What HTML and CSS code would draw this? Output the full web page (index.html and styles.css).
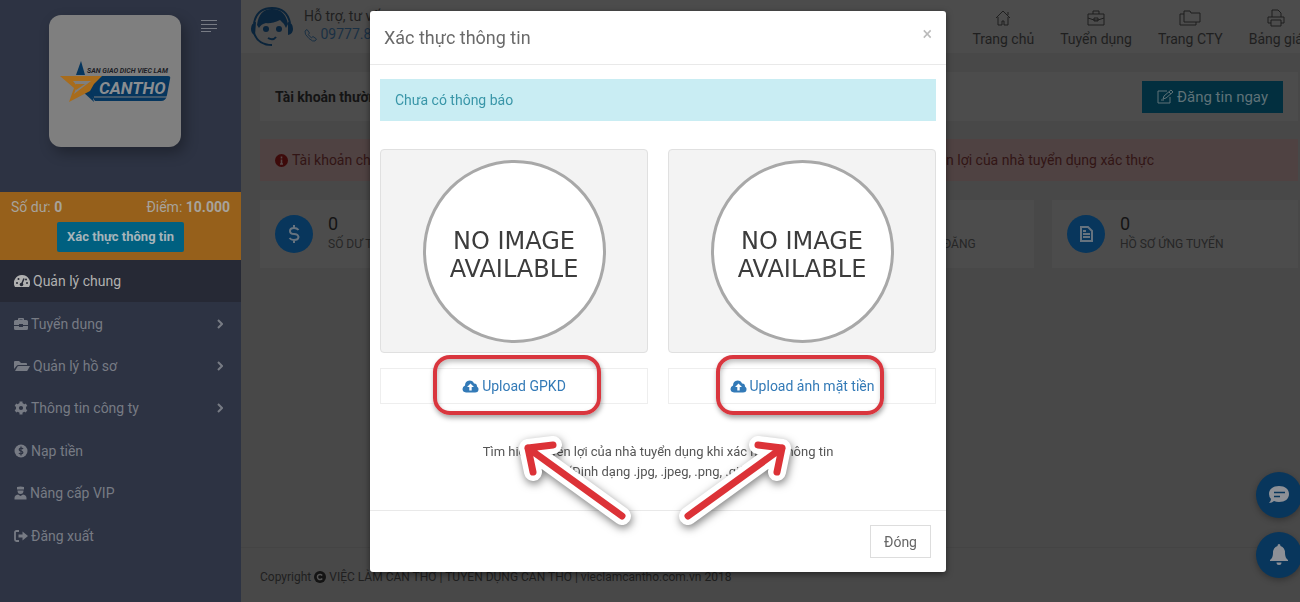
FILE: index.html
```
<!DOCTYPE html>
<html lang="vi">
<head>
    <meta charset="UTF-8">
    <meta name="viewport" content="width=device-width, initial-scale=1.0">
    <title>Xác thực thông tin</title>
    <link rel="stylesheet" href="styles.css">
</head>
<body>
    <div class="layout">
        <aside class="sidebar">
            <div class="brand">
                <a href="#" class="logo" aria-label="Sàn giao dịch việc làm Cần Thơ">
                    <svg viewBox="0 0 132 132" width="132" height="132">
                        <path d="M32 46l4 14h-9z" fill="#06365e"/>
                        <path d="M50 61h69q3 0 2 3l-3 16q-1 6-6 6H46l-7-10z" fill="#06365e"/>
                        <path d="M33 76l12 11-4-15z" fill="#06365e"/>
                        <path d="M45 82h73" stroke="#7f7f7f" stroke-width="1"/>
                        <path d="M11 61h42l-8 8-4 7-21 11 5-14z" fill="#a86c1c"/>
                        <path d="M24 66h18L25 79l3-8z" fill="#7f7f7f"/>
                        <path d="M27 69h9l-9 6z" fill="#a86c1c"/>
                        <text x="38" y="58" class="logo-small">SAN GIAO DICH VIEC LAM</text>
                        <text x="50" y="79" class="logo-big">CANTHO</text>
                    </svg>
                </a>
                <button class="toggle" aria-label="Menu">
                    <svg viewBox="0 0 16 14" width="16" height="14" stroke="currentColor"><path d="M0 1.500h16M0 5.500h16M0 9.500h16M0 12.500h10"/></svg>
                </button>
            </div>
            <div class="balance">
                <div class="balance-row">
                    <span>Số dư: <b>0</b></span>
                    <span>Điểm: <b>10.000</b></span>
                </div>
                <button class="verify">Xác thực thông tin</button>
            </div>
            <nav class="menu">
                <a href="#" class="active">
                    <svg viewBox="0 0 16 14" width="16" height="14"><path d="M8 1a8 8 0 0 0-7 12h14A8 8 0 0 0 8 1z" fill="currentColor"/><path d="M7.500 10.500l2.500-6" stroke="#262935" stroke-width="1.500"/><g fill="#262935"><circle cx="7.500" cy="10.500" r="1.800"/><circle cx="3" cy="9" r="1"/><circle cx="4.500" cy="5" r="1"/><circle cx="12" cy="5.500" r="1"/><circle cx="13" cy="9" r="1"/></g></svg>
                    Quản lý chung
                </a>
                <a href="#">
                    <svg viewBox="0 0 14 14" width="14" height="14" fill="currentColor"><path d="M4 3V2q0-1 1-1h4q1 0 1 1v1h2.500Q14 3 14 4.500V8H9V7H5v1H0V4.500Q0 3 1.500 3zm1.500 0h3v-.6h-3zM0 9h5v1h4V9h5v2.500q0 1.500-1.500 1.500h-11Q0 13 0 11.500z"/></svg>
                    Tuyển dụng
                    <svg class="arrow" viewBox="0 0 6 10" width="6" height="10"><path d="M1 1l4 4-4 4"/></svg>
                </a>
                <a href="#">
                    <svg viewBox="0 0 16 14" width="16" height="14" fill="currentColor"><path d="M0 10V3q0-1 1-1h4l2 2h5q1 0 1 1v1H4.500Q3 6 2.500 7zM1 12l2.500-4.500Q4 7 4.500 7H16l-2.500 4.500q-.5.500-1 .5z"/></svg>
                    Quản lý hồ sơ
                    <svg class="arrow" viewBox="0 0 6 10" width="6" height="10"><path d="M1 1l4 4-4 4"/></svg>
                </a>
                <a href="#">
                    <svg viewBox="0 0 14 14" width="14" height="14"><circle cx="7" cy="7" r="3.600" fill="none" stroke="currentColor" stroke-width="3"/><path d="M7 .5v2.500M7 11v2.500M1.400 3.700l2.200 1.300M10.400 9l2.200 1.300M1.400 10.300L3.600 9M10.400 5l2.200-1.300" stroke="currentColor" stroke-width="3"/></svg>
                    Thông tin công ty
                    <svg class="arrow" viewBox="0 0 6 10" width="6" height="10"><path d="M1 1l4 4-4 4"/></svg>
                </a>
                <a href="#">
                    <svg viewBox="0 0 14 14" width="14" height="14"><circle cx="7" cy="7" r="6.500" fill="currentColor"/><path d="M9.200 4.800Q7 3.600 5.500 4.700 4.600 6.300 7 7q2.600.8 1.500 2.300Q7 10.400 4.800 9.200M7 2.600v8.800" fill="none" stroke="#2d3343" stroke-width="1.200"/></svg>
                    Nạp tiền
                </a>
                <a href="#">
                    <svg viewBox="0 0 13 14" width="13" height="14" fill="currentColor"><path d="M3 1q3.500-1 7 0v2.500H3zM3.500 4.500h6q0 3.500-3 3.500t-3-3.500zM4 8.500l2.500 1.500L9 8.500q3.500.5 3.500 3.500v1.500H.5V12Q.5 9 4 8.500z"/></svg>
                    Nâng cấp VIP
                </a>
                <a href="#">
                    <svg viewBox="0 0 14 14" width="14" height="14"><path d="M5 2H2.500Q1 2 1 3.500v7Q1 12 2.500 12H5" fill="none" stroke="currentColor" stroke-width="1.800"/><path d="M4.500 5.500h4v-3L14 7l-5.500 4.500v-3h-4z" fill="currentColor"/></svg>
                    Đăng xuất
                </a>
            </nav>
        </aside>

        <main class="main">
            <header class="topbar">
                <div class="hotline">
                    <svg viewBox="0 0 44 40" width="44" height="40">
                        <path d="M7 18Q9 2 22 2q13 0 16 15l-2 4q-2-5-6-8-9 4-14 3-5 1-7 5z" fill="#0a243b"/>
                        <path d="M4 16Q7 1 22 1t18 15" fill="none" stroke="#0a243b" stroke-width="2"/>
                        <path d="M6 15q-5 1-5 7 0 5 4 6zM38 15q5 1 5 7 0 5-5 6z" fill="#0a243b"/>
                        <path d="M4 26q4 12 18 12" fill="none" stroke="#0a243b" stroke-width="2"/>
                        <circle cx="16" cy="22" r="3" fill="#0a243b"/><circle cx="29" cy="22" r="3" fill="#0a243b"/>
                        <path d="M18 31q5 3 8-1" fill="none" stroke="#0a243b" stroke-width="2"/>
                    </svg>
                    <div>
                        <p>Hỗ trợ, tư vấn</p>
                        <a href="#">
                            <svg class="line-icon" viewBox="0 0 13 13" width="13" height="13"><path d="M1 2l2-1.500L5.500 4 4.300 5.500q1 2 3.200 3.200L9 7.500l3.500 2.500-1.500 2Q9 13 5 9.500 0 5 1 2z"/></svg>
                            09777.85.179
                        </a>
                    </div>
                </div>
                <nav class="topnav">
                    <a href="#">
                        <svg class="line-icon" viewBox="0 0 20 18" width="20" height="18"><path d="M3 9l7-7 7 7M5 8v8h4v-4h2v4h4V8M15 6V3"/></svg>
                        Trang chủ
                    </a>
                    <a href="#">
                        <svg class="line-icon" viewBox="0 0 20 18" width="20" height="18"><path d="M2 5h16v11H2zM7 5V2h6v3M2 9l6 2h4l6-2M8 9h4v3H8z"/></svg>
                        Tuyển dụng
                    </a>
                    <a href="#">
                        <svg class="line-icon" viewBox="0 0 22 18" width="22" height="18"><path d="M5 2h6l1 2h9v9H5zM5 5H1v11h16v-3"/></svg>
                        Trang CTY
                    </a>
                    <a href="#">
                        <svg class="line-icon" viewBox="0 0 20 18" width="20" height="18"><path d="M6 8V1h6l3 3v4M5 14H2V8h16v6h-3M5 11h10v6H5z"/></svg>
                        Bảng giá
                    </a>
                </nav>
            </header>

            <div class="content">
                <section class="account">
                    <h1>Tài khoản thường</h1>
                    <button class="post">
                        <svg viewBox="0 0 17 15" width="17" height="15" fill="none" stroke="currentColor"><path d="M10 2H1v12h12V8M6 10l1-3 7-6 2 2-7 6zM12 3l2 2M4 11h3"/></svg>
                        Đăng tin ngay
                    </button>
                </section>

                <div class="warning">
                    <svg viewBox="0 0 13 13" width="13" height="13"><circle cx="6.500" cy="6.500" r="6.500" fill="#3d0a0a"/><path d="M6.500 2.500v2M6.500 5.500v5M5 10h3" stroke="#574747" stroke-width="1.600"/></svg>
                    Tài khoản chưa được xác thực, vui lòng xác thực thông tin để sử dụng đầy đủ dịch vụ. Tìm hiểu thêm quyền lợi của nhà tuyển dụng xác thực
                </div>

                <section class="stats">
                    <div class="stat">
                        <span class="stat-icon"><svg viewBox="0 0 12 20" width="12" height="20" fill="none" stroke="currentColor" stroke-width="2"><path d="M10.500 6Q9 4 6 4 2 4 2 7t4 3 4.500 3Q10 16 6 16 3 16 1.500 14M6 1v3M6 16v3"/></svg></span>
                        <div><strong>0</strong><span>SỐ DƯ TÀI KHOẢN</span></div>
                    </div>
                    <div class="stat">
                        <span class="stat-icon"></span>
                        <div><strong>0</strong><span>ĐIỂM</span></div>
                    </div>
                    <div class="stat">
                        <span class="stat-icon"></span>
                        <div><strong>0</strong><span>TIN TUYỂN MỚI ĐĂNG</span></div>
                    </div>
                    <div class="stat">
                        <span class="stat-icon"><svg viewBox="0 0 14 16" width="14" height="16" fill="none" stroke="currentColor" stroke-width="2"><path d="M2 1h7l4 4v10H2zM4 8h7M4 11h7M4 5h3"/></svg></span>
                        <div><strong>0</strong><span>HỒ SƠ ỨNG TUYỂN</span></div>
                    </div>
                </section>
            </div>

            <footer class="footer">
                Copyright
                <svg viewBox="0 0 12 12" width="12" height="12"><circle cx="6" cy="6" r="6" fill="#141414"/><path d="M8.200 4.500a2.600 2.600 0 1 0 0 3" fill="none" stroke="#555" stroke-width="1.500"/></svg>
                VIỆC LÀM CẦN THƠ | TUYỂN DỤNG CẦN THƠ | vieclamcantho.com.vn 2018
            </footer>
        </main>
    </div>

    <div class="floating">
        <button aria-label="Tin nhắn">
            <svg viewBox="0 0 22 20" width="22" height="20"><path d="M11 1c6 0 10 3 10 8s-4 8-10 8q-3 0-5-1-2 2-5 2 2-2 2-4-2-2-2-5c0-5 4-8 10-8z" fill="currentColor"/><path d="M6 7.500h11M6 11.500h6" stroke="#08365c" stroke-width="1.500"/></svg>
        </button>
        <button aria-label="Thông báo">
            <svg viewBox="0 0 20 22" width="20" height="22" fill="currentColor"><path d="M10 0q1.500 0 1.500 2Q16 3.500 16 9q0 5 3 7v1H1v-1q3-2 3-7 0-5.500 4.500-7Q8.500 0 10 0zM7.500 18.500h5Q12.500 21 10 21t-2.500-2.500z"/></svg>
        </button>
    </div>

    <div class="overlay">
        <div class="modal" role="dialog" aria-labelledby="modal-title">
            <div class="modal-header">
                <h2 id="modal-title">Xác thực thông tin</h2>
                <button class="close" aria-label="Close">×</button>
            </div>
            <div class="modal-body">
                <div class="notice">Chưa có thông báo</div>
                <div class="uploads">
                    <div class="upload">
                        <div class="preview"><div class="no-image">NO IMAGE<br>AVAILABLE</div></div>
                        <div class="upload-box">
                            <a href="#">
                                <svg viewBox="0 0 17 13" width="17" height="13"><path d="M4 12.500Q.5 12 .5 9 .5 6.500 3 5.500 3 1 7.500.5q3.500 0 4.500 3 3-.2 3 3 2 1 1.500 3.500-.5 2.500-3.500 2.500z" fill="currentColor"/><path d="M8.500 3.500L5 7h2.300v3.500h2.400V7H12z" fill="#fff"/></svg>
                                Upload GPKD
                            </a>
                            <span class="mark mark-left"></span>
                        </div>
                    </div>
                    <div class="upload">
                        <div class="preview"><div class="no-image">NO IMAGE<br>AVAILABLE</div></div>
                        <div class="upload-box">
                            <a href="#">
                                <svg viewBox="0 0 17 13" width="17" height="13"><path d="M4 12.500Q.5 12 .5 9 .5 6.500 3 5.500 3 1 7.500.5q3.500 0 4.500 3 3-.2 3 3 2 1 1.500 3.500-.5 2.500-3.500 2.500z" fill="currentColor"/><path d="M8.500 3.500L5 7h2.300v3.500h2.400V7H12z" fill="#fff"/></svg>
                                Upload ảnh mặt tiền
                            </a>
                            <span class="mark mark-right"></span>
                        </div>
                    </div>
                </div>
                <p class="hint">Tìm hiểu quyền lợi của nhà tuyển dụng khi xác nhận thông tin<br>(Định dạng .jpg, .jpeg, .png, .gif)</p>
            </div>
            <div class="modal-footer">
                <button class="dismiss">Đóng</button>
            </div>
            <svg class="pointers" viewBox="0 0 290 110" width="290" height="110">
                <g class="pointer-edge"><path d="M112 86L18 18M43 15L18 18l5 24"/><path d="M178 86l94-68M248 15l24 3-5 24"/></g>
                <g class="pointer-line"><path d="M112 86L18 18M43 15L18 18l5 24"/><path d="M178 86l94-68M248 15l24 3-5 24"/></g>
            </svg>
        </div>
    </div>
</body>
</html>
```
FILE: styles.css
```
* {
    box-sizing: border-box;
}
body {
    margin: 0;
    font-family: Roboto, "Liberation Sans", sans-serif;
    font-size: 14px;
    line-height: 20px;
    color: #1f1f1f;
    background: #484848;
    overflow: hidden;
}
h1, h2, p {
    margin: 0;
}
a {
    color: inherit;
    text-decoration: none;
}
button {
    font: inherit;
    color: inherit;
    border: none;
    background: none;
    padding: 0;
    cursor: pointer;
}
svg {
    flex: none;
}
.layout {
    display: flex;
    min-height: 100vh;
}

/* sidebar */
.sidebar {
    width: 241px;
    flex: none;
    background: #2d3343;
    color: #777b84;
}
.brand {
    display: flex;
    align-items: flex-start;
    justify-content: space-between;
    height: 192px;
    padding: 15px 24px 0 49px;
}
.logo {
    height: 132px;
    border-radius: 12px;
    background: #7f7f7f;
    box-shadow: 4px 6px 14px rgba(0, 0, 0, 0.3);
}
.logo-small {
    font: italic bold 7px Roboto, sans-serif;
    fill: #1c2026;
}
.logo-big {
    font: italic bold 17px Roboto, sans-serif;
    fill: #8a8d90;
}
.toggle {
    height: 14px;
    margin-top: 4px;
    line-height: 0;
}
.balance {
    height: 68px;
    padding: 5px 11px;
    text-align: center;
    background: #96601b;
    color: #a7a39c;
}
.balance-row {
    display: flex;
    justify-content: space-between;
    margin-bottom: 5px;
}
.verify {
    height: 30px;
    padding: 0 10px;
    border-radius: 2px;
    font-size: 13px;
    font-weight: bold;
    background: #006080;
    color: #a6b4ba;
}
.menu {
    display: grid;
    grid-template-rows: repeat(7, 1fr);
    height: 297px;
}
.menu a {
    display: flex;
    align-items: center;
    gap: 3px;
    padding: 0 18px 0 14px;
}
.menu .active {
    background: #262935;
    color: #b0b0b0;
}
.arrow {
    margin-left: auto;
    fill: none;
    stroke: currentColor;
    stroke-width: 2;
}

/* page */
.main {
    flex: 1;
    min-width: 0;
    display: flex;
    flex-direction: column;
}
.topbar {
    display: flex;
    justify-content: space-between;
    height: 53px;
    padding: 7px 0 0 9px;
    margin-right: -3px;
    background: #4c4c4c;
}
.hotline {
    display: flex;
    gap: 10px;
    line-height: 18px;
}
.hotline a {
    color: #1a3044;
}
.line-icon {
    fill: none;
    stroke: currentColor;
}
.hotline .line-icon {
    vertical-align: middle;
}
.topnav {
    display: flex;
    gap: 26px;
}
.topnav a {
    display: flex;
    flex-direction: column;
    align-items: center;
    gap: 2px;
    padding-top: 2px;
}
.content {
    flex: 1;
    padding: 19px 2px 0 19px;
}
.account {
    display: flex;
    align-items: center;
    justify-content: space-between;
    height: 49px;
    padding: 0 15px;
    margin-bottom: 18px;
    background: #4c4c4c;
}
.account h1 {
    font-size: 14px;
    color: #141414;
}
.post {
    display: flex;
    align-items: center;
    gap: 3px;
    height: 32px;
    padding: 0 15px;
    font-size: 15px;
    background: #022f3f;
    color: #5f7278;
}
.warning {
    display: flex;
    align-items: center;
    gap: 4px;
    height: 42px;
    padding: 0 15px;
    margin-bottom: 19px;
    white-space: nowrap;
    background: #4f4242;
    color: #321515;
}
.stats {
    display: grid;
    grid-template-columns: repeat(4, 1fr);
    gap: 18px;
}
.stat {
    display: flex;
    align-items: center;
    gap: 15px;
    height: 68px;
    padding: 0 15px;
    background: #4c4c4c;
}
.stat strong, .stat div span {
    display: block;
    white-space: nowrap;
}
.stat strong {
    font-size: 18px;
    font-weight: normal;
    color: #141414;
}
.stat div span {
    font-size: 12px;
    color: #262626;
}
.stat-icon {
    display: flex;
    align-items: center;
    justify-content: center;
    flex: none;
    width: 38px;
    height: 38px;
    border-radius: 50%;
    background: #08365c;
    color: #66737f;
}
.footer {
    display: flex;
    align-items: center;
    gap: 3px;
    height: 55px;
    padding: 4px 19px 0;
    border-top: 1px solid #444;
    font-size: 12px;
}
.floating {
    position: fixed;
    right: -2px;
    bottom: 24px;
    display: flex;
    flex-direction: column;
    gap: 14px;
}
.floating button {
    display: flex;
    align-items: center;
    justify-content: center;
    width: 46px;
    height: 46px;
    border-radius: 50%;
    background: #08365c;
    color: #8d9096;
    box-shadow: 0 2px 6px rgba(0, 0, 0, 0.3);
}

/* modal */
.overlay {
    position: fixed;
    inset: 0;
    display: flex;
    justify-content: center;
    align-items: flex-start;
    padding: 11px 0 0 16px;
}
.modal {
    position: relative;
    width: 576px;
    border-radius: 3px;
    background: #fff;
    color: #555;
    box-shadow: 0 2px 6px rgba(0, 0, 0, 0.5);
}
.modal-header {
    display: flex;
    align-items: center;
    justify-content: space-between;
    height: 54px;
    padding: 0 14px;
    border-bottom: 1px solid #e9e9e9;
}
.modal-header h2 {
    font-size: 18px;
    font-weight: normal;
    color: #6a6a6a;
}
.close {
    padding-bottom: 8px;
    font-size: 18px;
    color: #bbb;
}
.modal-body {
    padding: 14px 10px 28px;
}
.notice {
    padding: 11px 15px;
    margin-bottom: 28px;
    background: #c9edf3;
    color: #3996a8;
}
.uploads {
    display: grid;
    grid-template-columns: 1fr 1fr;
    gap: 20px;
    margin-bottom: 38px;
}
.preview {
    display: flex;
    align-items: center;
    justify-content: center;
    height: 204px;
    margin-bottom: 15px;
    border: 1px solid #e0e0e0;
    border-radius: 4px;
    background: #f3f3f3;
}
.no-image {
    display: flex;
    align-items: center;
    justify-content: center;
    width: 183px;
    height: 183px;
    padding-top: 8px;
    border: 3px solid #a8a8a8;
    border-radius: 50%;
    background: #fff;
    color: #3c3c3c;
    font: 24px/28px "DejaVu Sans", sans-serif;
    text-align: center;
}
.upload-box {
    position: relative;
    display: flex;
    align-items: center;
    justify-content: center;
    height: 36px;
    border: 1px solid #eee;
    color: #337ab7;
}
.upload-box a {
    display: flex;
    align-items: center;
    gap: 3px;
}
.mark {
    position: absolute;
    top: -14px;
    width: 168px;
    height: 60px;
    border: 4px solid #d9363e;
    border-radius: 17px;
    box-shadow: 1px 3px 5px rgba(0, 0, 0, 0.35), inset 1px 3px 5px rgba(0, 0, 0, 0.25);
    pointer-events: none;
}
.mark-left {
    left: 52px;
}
.mark-right {
    left: 47px;
}
.hint {
    font-size: 13px;
    text-align: center;
}
.modal-footer {
    display: flex;
    justify-content: flex-end;
    padding: 14px 15px;
    border-top: 1px solid #e9e9e9;
}
.dismiss {
    height: 33px;
    padding: 0 13px;
    border: 1px solid #ddd;
    color: #666;
}
.pointers {
    position: absolute;
    left: 140px;
    top: 419px;
    fill: none;
    stroke-linecap: round;
    stroke-linejoin: round;
    pointer-events: none;
}
.pointer-edge {
    stroke: #fff;
    stroke-width: 18px;
    filter: drop-shadow(1px 3px 4px rgba(0, 0, 0, 0.5));
}
.pointer-line {
    stroke: #dc3237;
    stroke-width: 7px;
}
```
